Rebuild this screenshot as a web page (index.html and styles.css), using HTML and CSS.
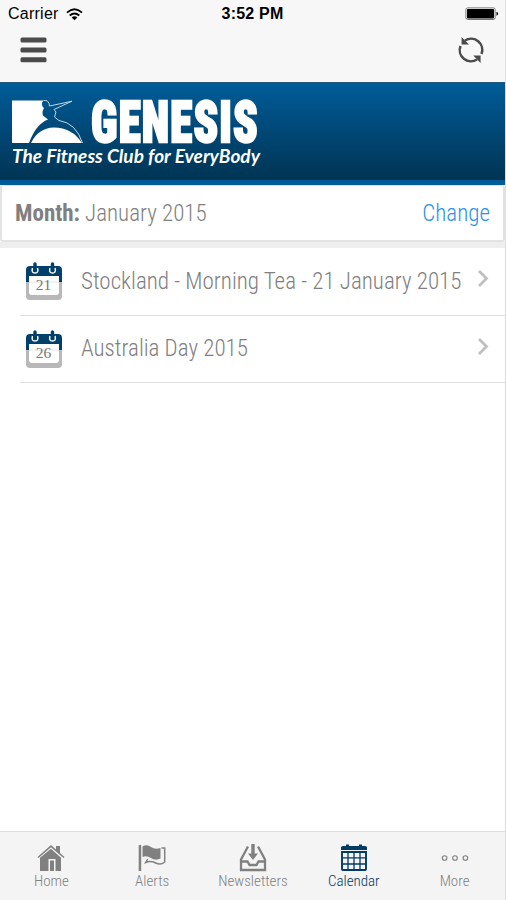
FILE: index.html
```html
<!DOCTYPE html>
<html lang="en">
<head>
<meta charset="utf-8">
<title>Genesis Calendar</title>
<link rel="stylesheet" href="styles.css">
</head>
<body>
<div class="app">
  <header class="top">
    <div class="status">
      <div class="carrier"><span>Carrier</span>
        <svg width="17" height="13" viewBox="0 0 17 13" fill="none" stroke="#000" stroke-width="1.9"><path d="M1 4.600Q8.500-1.900 16 4.600M3.700 7.500Q8.500 3.300 13.300 7.500"/><path d="M5.700 9.400Q8.500 7 11.300 9.400L8.500 12.300z" fill="#000" stroke="none"/></svg>
      </div>
      <div class="time">3:52 PM</div>
      <svg class="battery" width="34" height="14" viewBox="0 0 34 14"><rect x=".9" y=".9" width="29.2" height="11.6" rx="1.8" fill="#fff" stroke="#555" stroke-width=".8"/><rect x="2" y="2" width="27" height="9.4" rx=".7"/><path d="M31.500 4.700q1.600.4 1.600 2t-1.600 2z"/></svg>
    </div>
    <div class="toolbar">
      <svg width="27" height="26" viewBox="0 0 27 26" fill="#4b4b4b"><rect x=".5" y=".6" width="26" height="5" rx="1.500"/><rect x=".5" y="10.400" width="26" height="5" rx="1.500"/><rect x=".5" y="20.200" width="26" height="5" rx="1.500"/></svg>
      <svg width="28" height="28" viewBox="0 0 28 28" fill="none" stroke="#4b4b4b" stroke-width="2.500"><path d="M8 4.500A11.200 11.200 0 0 1 24.500 18M20 23.500A11.200 11.200 0 0 1 3.500 10"/><path d="M4.600 1.100v7.400h7.400zM16.200 19.500h7.400v7.400z" fill="#4b4b4b" stroke="none"/></svg>
    </div>
  </header>
  <div class="banner">
    <svg class="logo" width="270" height="97" viewBox="0 83 270 97">
      <path fill="#fff" d="M12 100.500H43.500Q41 103 42.500 106.500L44 108Q41.500 112 43 115.500L48 119.500Q36 124 29 143H12z"/>
      <path fill="#fff" d="M31 143Q38 128 54 127.500Q72 127.500 82 143z"/>
      <path fill="none" stroke="#bcd6e6" stroke-width="1" d="M43.500 100.500Q49 99.500 49.500 106L72 101.200 54 109.500 56 112 54.500 117 59 120.500Q76 123 82.500 143"/>
      <text class="brand" x="91" y="142.300" textLength="168" lengthAdjust="spacingAndGlyphs">GENESIS</text>
      <text class="tag" x="12" y="163" textLength="248" lengthAdjust="spacingAndGlyphs">The Fitness Club for EveryBody</text>
    </svg>
  </div>
  <section class="month"><div><b>Month:</b> January 2015</div><a class="change">Change</a></section>
  <main class="list">
    <div class="row">
      <svg class="cal" width="36" height="39" viewBox="0 0 36 39"><use href="#calendar"/><text x="17.500" y="27.800">21</text></svg>
      <span class="title">Stockland - Morning Tea - 21 January 2015</span>
      <svg class="chev" width="13" height="19" viewBox="0 0 13 19"><path d="M2 2l7.500 7.500L2 17"/></svg>
    </div>
    <div class="row">
      <svg class="cal" width="36" height="39" viewBox="0 0 36 39">
        <g id="calendar"><path fill="#b8b8b8" d="M0 19h36v15q0 4-4 4H4q-4 0-4-4z"/><path fill="#00406b" d="M0 20V8q0-4 4-4h28q4 0 4 4v12z"/><path fill="#fff" d="M3 14h30v16q0 3-3 3H6q-3 0-3-3z"/><path d="M3 20h30" stroke="#e6e6e6"/><path fill="none" stroke="#fff" stroke-width="1.500" d="M6.500 6q-1.500 5 2.500 5t2.500-5M24 6q-1.500 5 2.500 5t2.500-5"/><path stroke="#00406b" stroke-width="3.400" stroke-linecap="round" d="M9 2v5M26.500 2v5"/></g>
        <text x="17.500" y="27.800">26</text></svg>
      <span class="title">Australia Day 2015</span>
      <svg class="chev" width="13" height="19" viewBox="0 0 13 19"><path d="M2 2l7.500 7.500L2 17"/></svg>
    </div>
  </main>
  <nav class="tabs">
    <div class="tab"><svg width="28" height="28" viewBox="0 0 28 28"><path fill="#808080" d="M14 1l5 4.500V2h4v7l4.500 4-1 1L14 3.200 1.500 14l-1-1zM14 4.800l10 9V27h-5.500V15h-7v12H3V13.800z"/><path fill="#808080" d="M13 16.500h4v10.500H13z"/></svg><span>Home</span></div>
    <div class="tab"><svg width="28" height="28" viewBox="0 0 28 28"><path fill="#808080" d="M.7 1h2.500v26H.7zM4.500 2.500Q9 0 13 3t9.500 1v10.500q-5 2.500-9.500-.5t-8.500-1z"/><path fill="none" stroke="#808080" stroke-width="1.500" d="M23.500 4h3.200v14q-4 3.500-9 1t-10-.5l2-3.500"/></svg><span>Alerts</span></div>
    <div class="tab"><svg width="28" height="28" viewBox="0 0 28 28"><path fill="none" stroke="#808080" stroke-width="2.300" d="M9 2.500L2 15.500V26h24V15.500L19 2.500M2 17.500h6.500l2 3.500h7l2-3.500H26"/><path fill="#808080" d="M12.300 0h3.400v9.500H19l-5 6.500-5-6.500h3.300z"/></svg><span>Newsletters</span></div>
    <div class="tab active"><svg width="28" height="28" viewBox="0 0 28 28"><path fill="#003a66" d="M1 6V3.500Q1 2 3 2h3V.5h3V2h10V.5h3V2h3q2 0 2 1.500V6z"/><path fill="none" stroke="#003a66" stroke-width="1.900" d="M2 8h24v17q0 1-1 1H3q-1 0-1-1z"/><path stroke="#003a66" stroke-width="1.300" d="M8 8v18M14 8v18M20 8v18M2 13.800h24M2 20h24"/></svg><span>Calendar</span></div>
    <div class="tab"><svg width="28" height="28" viewBox="0 0 28 28" fill="none" stroke="#808080" stroke-width="1.100"><circle cx="3.600" cy="14" r="2.300"/><circle cx="14" cy="14" r="2.300"/><circle cx="24.400" cy="14" r="2.300"/></svg><span>More</span></div>
  </nav>
</div>
</body>
</html>
```
FILE: styles.css
```css
* { box-sizing: border-box; }
body { margin: 0; background: #fff; font-family: "Roboto Condensed", Roboto, sans-serif; font-stretch: 75%; font-weight: 300; color: #808080; }
svg { display: block; flex: none; }
.app { width: 506px; height: 900px; display: flex; flex-direction: column; border-right: 1px solid #dcdcdc; overflow: hidden; }
.top { height: 82px; background: #f7f7f7; }
.status { height: 28px; padding: 0 8px; display: grid; grid-template-columns: 1fr auto 1fr; align-items: center; font-family: "Liberation Sans", sans-serif; font-stretch: 100%; font-weight: 400; font-size: 16px; color: #000; }
.carrier { display: flex; align-items: center; gap: 7px; letter-spacing: .25px; }
.time { font-weight: 700; letter-spacing: .2px; }
.battery { justify-self: end; margin-right: -2px; }
.toolbar { height: 44px; display: flex; align-items: center; justify-content: space-between; padding: 0 20px; }
.banner { height: 103px; background: linear-gradient(#005c99, #003453); background-clip: padding-box; border-top: 1px solid #24577d; border-bottom: 5px solid #005c99; }
.logo { overflow: visible; }
.brand { font: 900 57px Roboto, sans-serif; font-stretch: 75%; letter-spacing: 1.5px; fill: #fff; stroke: #fff; stroke-width: 2.4px; }
.tag { font: italic 700 18px Lato, sans-serif; fill: #fff; }
.month { height: 57px; border: 2px solid #e3e3e3; border-top-width: 1px; border-radius: 3px; display: flex; align-items: center; justify-content: space-between; padding: 1px 13px 0; font-size: 23px; }
.month b { font-weight: 700; }
.change { color: #2e91ea; }
.list { flex: 1; border-top: 6px solid #eee; padding-left: 20px; }
.row { height: 67.5px; border-bottom: 1.5px solid #dedede; display: flex; align-items: center; padding: 0 15px 0 6px; }
.cal { margin: 1px 19px 0 0; }
.cal text { font: 15.5px "Liberation Serif", serif; fill: #777; text-anchor: middle; }
.title { flex: 1; font-size: 23px; white-space: nowrap; }
.chev { fill: none; stroke: #bfbfbf; stroke-width: 2.8px; margin-bottom: 5px; }
.tabs { height: 69px; background: #f4f4f4; border-top: 1.5px solid #dedede; display: grid; grid-template-columns: repeat(5, 1fr); padding: 12px 0 0 1px; }
.tab { display: flex; flex-direction: column; align-items: center; font-size: 15px; line-height: 18px; }
.active { color: #003a66; }
```
